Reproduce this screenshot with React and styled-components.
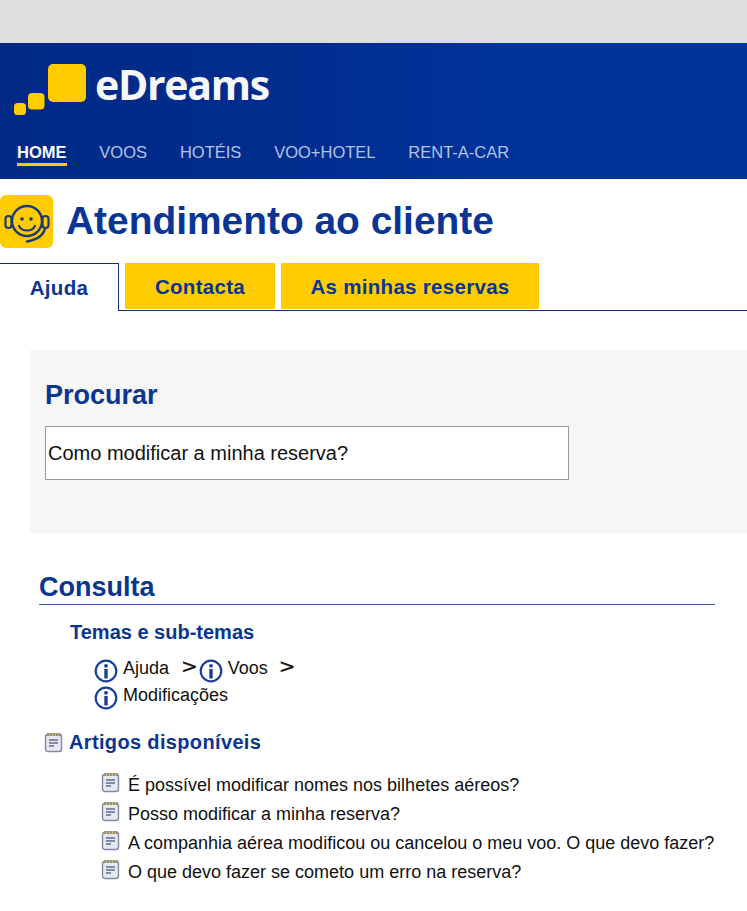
import React from "react";
import styled, { createGlobalStyle } from "styled-components";

const Global = createGlobalStyle`
  html, body { margin: 0; padding: 0; background: #fff; }
  body { font-family: "Liberation Sans", Arial, sans-serif; color: #000; }
`;
const Page = styled.div`width: 747px; height: 911px; overflow: hidden;`;
const TopBar = styled.div`height: 43px; background: #dedede;`;
const Header = styled.header`
  height: 136px; box-sizing: border-box; padding: 20px 0 0 14px;
  background: linear-gradient(90deg, #002a86 0%, #002c8c 35%, #00339a 65%, #00339a 100%);
`;
const LogoRow = styled.div`display: flex; align-items: flex-start; height: 53px;`;
const LogoMark = styled.svg`width: 72px; height: 53px; flex: none;`;
const LogoText = styled.div`
  font-family: "Open Sans", sans-serif; font-size: 41px; font-weight: 700; color: #f6f8fc;
  line-height: 42px; margin: 0 0 0 9px; letter-spacing: -1.3px;
`;
const Nav = styled.nav`display: flex; gap: 32.85px; margin: 26px 0 0 3px;`;
const NavItem = styled.a`
  font-size: 16.5px; line-height: 20px; height: 24px; box-sizing: border-box;
  color: ${p => (p.$active ? "#fff" : "#b4c4e6")};
  font-weight: ${p => (p.$active ? 700 : 400)};
  border-bottom: ${p => (p.$active ? "3px solid #ffcc00" : "none")};
`;
const TitleRow = styled.div`display: flex; align-items: center; gap: 13px; height: 84px;`;
const TitleIcon = styled.svg`width: 53px; height: 53px; flex: none;`;
const Title = styled.h1`
  margin: 0; font-size: 38.9px; line-height: 44px; font-weight: 700; color: #0a3594;
`;
const Tabs = styled.div`
  display: flex; align-items: flex-start; gap: 6px; height: 48px; box-sizing: border-box;
  border-bottom: 1px solid #0b2f7a;
`;
const Tab = styled.div`
  height: ${p => (p.$active ? "48px" : "46px")}; box-sizing: border-box;
  width: ${p => p.$w}px; font-size: 20.5px; font-weight: 700; color: #0a3590;
  letter-spacing: 0.3px; text-align: center; line-height: 48px;
  background: ${p => (p.$active ? "#fff" : "#ffcc00")};
  ${p => p.$active && "border-top: 1px solid #0b2f7a; border-right: 1px solid #0b2f7a;"}
`;
const SearchPanel = styled.section`
  margin: 39px 0 0 30px; height: 183px; box-sizing: border-box; padding: 28px 0 0 15px; background: #f6f6f6;
`;
const SearchTitle = styled.h2`
  margin: 0; font-size: 27px; line-height: 34px; height: 32px; font-weight: 700; color: #0a3590;
`;
const SearchBox = styled.div`
  margin-top: 16px; width: 524px; height: 54px; box-sizing: border-box; border: 1px solid #9a9a9a;
  background: #fff; padding-left: 2px; font-size: 20px; line-height: 53px; color: #111;
`;
const Consult = styled.section`margin: 37px 32px 0 39px;`;
const ConsultTitle = styled.h2`
  margin: 0; font-size: 27px; line-height: 35px; height: 34px; font-weight: 700; color: #0a3590;
  border-bottom: 1px solid #3a62a8;
`;
const SubTitle = styled.h3`
  margin: 15px 0 0 31px; font-size: 20px; line-height: 24px; font-weight: 700; color: #0a3590;
`;
const Crumbs = styled.div`margin: 12px 0 0 55px;`;
const CrumbRow = styled.div`display: flex; align-items: flex-start; height: 27px; font-size: 18px; color: #111;`;
const Crumb = styled.span`display: inline-flex; align-items: flex-start; line-height: 24px;`;
const InfoIcon = styled.svg`width: 24px; height: 24px; margin: 3px 5px 0 0; flex: none;`;
const Sep = styled.span`
  font-size: 20px; line-height: 21px; margin: 0 ${p => p.$r}px 0 ${p => p.$l}px;
  font-family: "DejaVu Sans", sans-serif; -webkit-text-stroke: 0.3px #111;
`;
const ArticlesHead = styled.div`display: flex; align-items: center; margin: 18px 0 0 5px; gap: 6px; height: 28px;`;
const ArticlesTitle = styled.h3`
  margin: 0; font-size: 20px; line-height: 24px; font-weight: 700; color: #0a3590; letter-spacing: 0.35px;
`;
const NoteIcon = styled.svg`width: 19px; height: 21px; flex: none;`;
const List = styled.ul`list-style: none; margin: 16px 0 0 62px; padding: 0;`;
const Item = styled.li`
  display: flex; gap: 8px; height: 29px; font-size: 18px; line-height: 27px; color: #111; white-space: nowrap;
`;

const Info = () => (
  <InfoIcon viewBox="0 0 24 24">
    <circle cx="12" cy="12" r="10.3" fill="#fff" stroke="#1b3f94" strokeWidth="2.2" />
    <circle cx="12" cy="6.8" r="1.9" fill="#1b3f94" />
    <rect x="10.3" y="10" width="3.4" height="9.5" fill="#1b3f94" />
  </InfoIcon>
);

const Note = () => (
  <NoteIcon viewBox="0 0 19 21">
    <rect x="1.5" y="2.5" width="16" height="17" rx="2.5" fill="#e6e8ef" stroke="#7f8aa5" strokeWidth="1.4" />
    <rect x="3" y="1" width="13" height="3" fill="#c9b78a" />
    <path d="M4 1v3M7 1v3M10 1v3M13 1v3M16 1v3" stroke="#6b6b6b" strokeWidth="1" />
    <path d="M5 8h9M5 11h9M5 14h5" stroke="#5d6c90" strokeWidth="1.5" />
  </NoteIcon>
);

export default function App() {
  return (
    <Page>
      <Global />
      <TopBar />
      <Header>
        <LogoRow>
          <LogoMark viewBox="0 0 72 53">
            <rect x="34" y="1" width="38" height="38" rx="5" fill="#ffcc00" />
            <rect x="14" y="30" width="16.5" height="16.5" rx="4" fill="#ffcc00" />
            <rect x="0" y="40" width="12" height="12" rx="3.5" fill="#ffcc00" />
          </LogoMark>
          <LogoText>eDreams</LogoText>
        </LogoRow>
        <Nav>
          <NavItem $active>HOME</NavItem>
          <NavItem>VOOS</NavItem>
          <NavItem>HOTÉIS</NavItem>
          <NavItem>VOO+HOTEL</NavItem>
          <NavItem>RENT-A-CAR</NavItem>
        </Nav>
      </Header>
      <TitleRow>
        <TitleIcon viewBox="0 0 53 53">
          <rect width="53" height="53" rx="6" fill="#ffcc00" />
          <circle cx="27" cy="26" r="15" fill="none" stroke="#1c3a78" strokeWidth="2.4" />
          <rect x="5.5" y="21" width="6" height="12" rx="3" fill="none" stroke="#1c3a78" strokeWidth="2.2" />
          <rect x="42.5" y="21" width="6" height="12" rx="3" fill="none" stroke="#1c3a78" strokeWidth="2.2" />
          <path d="M45 33c-1 7-8 12-18 13.5" fill="none" stroke="#1c3a78" strokeWidth="2.4" strokeLinecap="round" />
          <circle cx="22" cy="24" r="1.8" fill="#1c3a78" />
          <circle cx="31" cy="24" r="1.8" fill="#1c3a78" />
          <path d="M19 31c3 6 13 6 16 0" fill="none" stroke="#1c3a78" strokeWidth="2.2" strokeLinecap="round" />
        </TitleIcon>
        <Title>Atendimento ao cliente</Title>
      </TitleRow>
      <Tabs>
        <Tab $active $w={119}>Ajuda</Tab>
        <Tab $w={150}>Contacta</Tab>
        <Tab $w={258}>As minhas reservas</Tab>
      </Tabs>
      <SearchPanel>
        <SearchTitle>Procurar</SearchTitle>
        <SearchBox>Como modificar a minha reserva?</SearchBox>
      </SearchPanel>
      <Consult>
        <ConsultTitle>Consulta</ConsultTitle>
        <SubTitle>Temas e sub-temas</SubTitle>
        <Crumbs>
          <CrumbRow>
            <Crumb><Info />Ajuda</Crumb>
            <Sep $l={12} $r={1}>&gt;</Sep>
            <Crumb><Info />Voos</Crumb>
            <Sep $l={11} $r={0}>&gt;</Sep>
          </CrumbRow>
          <CrumbRow>
            <Crumb><Info />Modificações</Crumb>
          </CrumbRow>
        </Crumbs>
        <ArticlesHead>
          <Note />
          <ArticlesTitle>Artigos disponíveis</ArticlesTitle>
        </ArticlesHead>
        <List>
          {[
            "É possível modificar nomes nos bilhetes aéreos?",
            "Posso modificar a minha reserva?",
            "A companhia aérea modificou ou cancelou o meu voo. O que devo fazer?",
            "O que devo fazer se cometo um erro na reserva?",
          ].map(t => (
            <Item key={t}><Note />{t}</Item>
          ))}
        </List>
      </Consult>
    </Page>
  );
}
